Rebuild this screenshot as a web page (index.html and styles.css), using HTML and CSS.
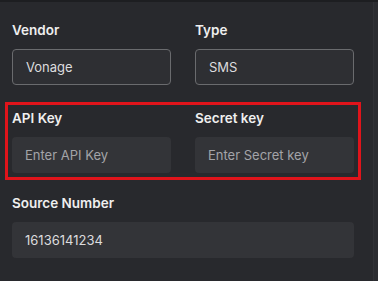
FILE: index.html
```html
<!DOCTYPE html>
<html lang="en">
<head>
  <meta charset="UTF-8">
  <meta name="viewport" content="width=device-width, initial-scale=1.0">
  <title>Provider settings</title>
  <link rel="stylesheet" href="styles.css">
</head>
<body>
  <div class="page">
    <div class="form">
      <div class="row">
        <div class="field">
          <label>Vendor</label>
          <div class="input select">Vonage</div>
        </div>
        <div class="field">
          <label>Type</label>
          <div class="input select">SMS</div>
        </div>
      </div>
      <div class="row highlight">
        <div class="field">
          <label>API Key</label>
          <input type="text" placeholder="Enter API Key">
        </div>
        <div class="field">
          <label>Secret key</label>
          <input type="text" placeholder="Enter Secret key">
        </div>
      </div>
      <div class="row single">
        <div class="field">
          <label>Source Number</label>
          <input type="text" value="16136141234">
        </div>
      </div>
    </div>
    <div class="scroll-edge"></div>
  </div>
</body>
</html>
```

FILE: styles.css
```css
* {
  margin: 0;
  padding: 0;
  box-sizing: border-box;
}
html, body {
  height: 100%;
}
body {
  font-family: "Inter", "Noto Sans", sans-serif;
  background-color: #28292d;
  color: #ececec;
  border-top: 2px solid #1d1e21;
}
.page {
  display: flex;
  height: 100%;
}
.form {
  flex: 1;
  padding: 19px 0 0 12px;
}
.scroll-edge {
  width: 5px;
  border-left: 1px solid #313236;
  background-color: #2b2c30;
}
.row {
  display: grid;
  grid-template-columns: 159px 159px;
  column-gap: 24px;
  width: 342px;
  margin-bottom: 24px;
}
.row.highlight {
  outline: 3px solid #e0141b;
  outline-offset: 4px;
  margin-bottom: 21px;
}
.row.single {
  grid-template-columns: 342px;
}
.field {
  display: flex;
  flex-direction: column;
  gap: 10px;
}
.field label {
  font-size: 13.5px;
  font-weight: 600;
  line-height: 18px;
  color: #efefef;
}
.input,
.field input {
  height: 36px;
  padding: 0 13px;
  font-family: inherit;
  font-size: 13px;
  color: #dcdcde;
  background-color: #333438;
  border: none;
  border-radius: 4px;
  display: flex;
  align-items: center;
  outline: none;
}
.input.select {
  background-color: #2e2f33;
  border: 1px solid #6a6b6e;
}
.field input::placeholder {
  color: #a3a4a8;
}
```
